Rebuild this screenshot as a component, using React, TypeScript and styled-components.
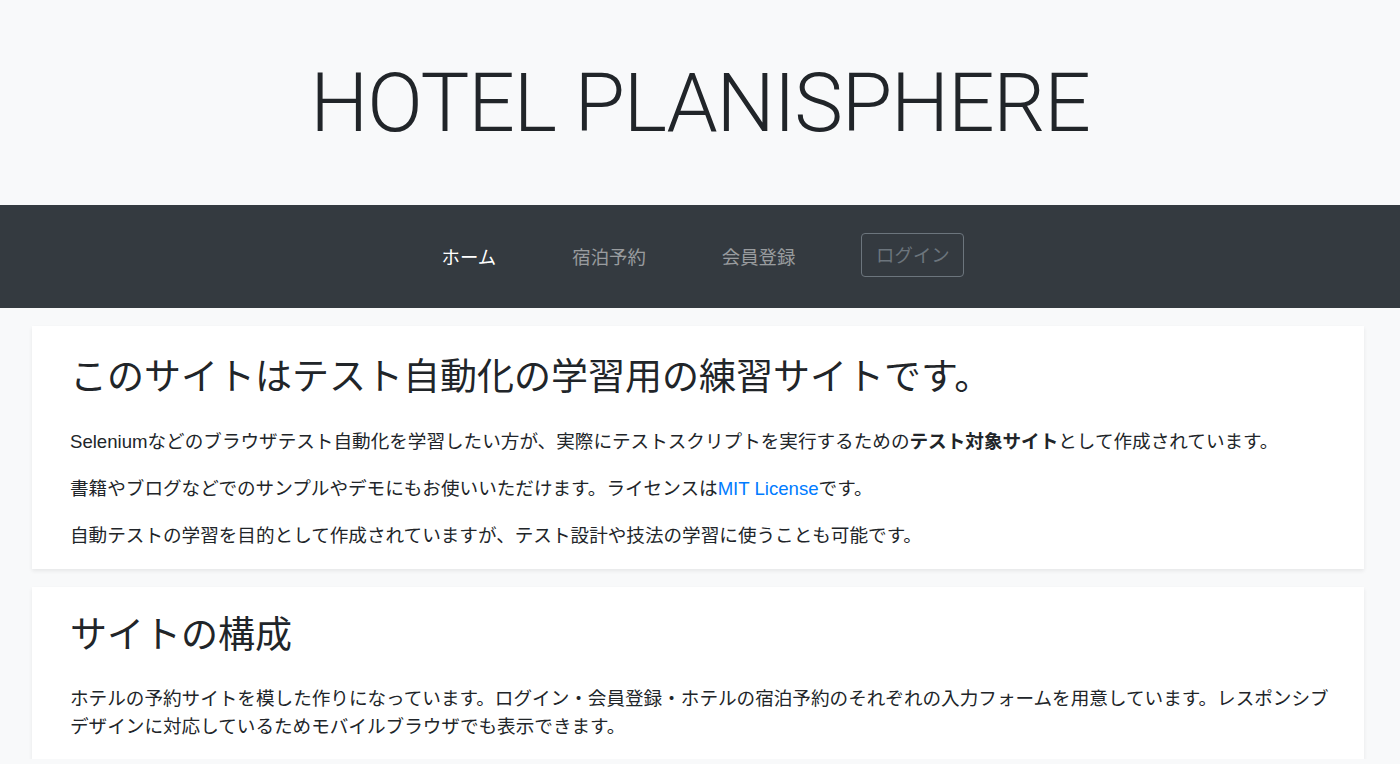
import React from "react";
import styled, { createGlobalStyle } from "styled-components";

const GlobalStyle = createGlobalStyle`
  html, body {
    margin: 0;
    padding: 0;
    background: #f8f9fa;
  }
  body {
    font-family: "Liberation Sans", "Noto Sans CJK JP", sans-serif;
    color: #212529;
    font-size: 18.6px;
    line-height: 1.5;
  }
  * { box-sizing: border-box; }
`;

const Header = styled.header`
  height: 205px;
  display: flex;
  align-items: center;
  justify-content: center;
  background: #f8f9fa;
`;

const Title = styled.h1`
  margin: 0;
  font-family: Roboto, "Liberation Sans", sans-serif;
  font-weight: 300;
  font-size: 82px;
  line-height: 1;
  color: #212529;
  letter-spacing: -1.2px;
`;

const NavBar = styled.nav`
  height: 103px;
  background: #343a40;
  display: flex;
  align-items: center;
  justify-content: center;
  gap: 66px;
  padding-left: 6px;
`;

const NavList = styled.div`
  display: flex;
  align-items: center;
  gap: 76px;
`;

const NavLink = styled.a<{ $active?: boolean }>`
  font-size: 18.4px;
  line-height: 1.5;
  text-decoration: none;
  color: ${(p) => (p.$active ? "#ffffff" : "rgba(255,255,255,0.5)")};
  font-family: "Noto Sans CJK JP", sans-serif;
`;

const LoginButton = styled.a`
  display: inline-flex;
  align-items: center;
  justify-content: center;
  width: 103px;
  height: 44px;
  margin-bottom: 4px;
  border: 1px solid #6c757d;
  border-radius: 4px;
  color: #6c757d;
  font-size: 18.4px;
  font-family: "Noto Sans CJK JP", sans-serif;
  text-decoration: none;
`;

const Main = styled.main`
  padding: 18px 36px 0 32px;
  display: flex;
  flex-direction: column;
  gap: 18px;
`;

const Card = styled.section<{ $pt: number }>`
  background: #ffffff;
  box-shadow: 0 2px 4px rgba(0, 0, 0, 0.075);
  padding: ${(p) => p.$pt}px 32px 0 38px;
`;

const Heading = styled.h2<{ $mb: number }>`
  margin: 0 0 ${(p) => p.$mb}px;
  font-weight: 400;
  font-size: 37px;
  line-height: 1.2;
  font-family: "Liberation Sans", "Noto Sans CJK JP", sans-serif;
`;

const Para = styled.p<{ $lh?: number }>`
  margin: 0 0 18.5px;
  line-height: ${(p) => p.$lh ?? 28.5}px;
`;

const Strong = styled.strong`
  font-weight: 700;
`;

const Link = styled.a`
  color: #007bff;
  text-decoration: none;
`;

export default function App() {
  return (
    <>
      <GlobalStyle />
      <Header>
        <Title>HOTEL PLANISPHERE</Title>
      </Header>
      <NavBar>
        <NavList>
          <NavLink $active href="#">ホーム</NavLink>
          <NavLink href="#">宿泊予約</NavLink>
          <NavLink href="#">会員登録</NavLink>
        </NavList>
        <LoginButton href="#">ログイン</LoginButton>
      </NavBar>
      <Main>
        <Card $pt={30}>
          <Heading $mb={28}>このサイトはテスト自動化の学習用の練習サイトです。</Heading>
          <Para>
            Seleniumなどのブラウザテスト自動化を学習したい方が、実際にテストスクリプトを実行するための
            <Strong>テスト対象サイト</Strong>として作成されています。
          </Para>
          <Para>
            書籍やブログなどでのサンプルやデモにもお使いいただけます。ライセンスは
            <Link href="#">MIT License</Link>です。
          </Para>
          <Para>
            自動テストの学習を目的として作成されていますが、テスト設計や技法の学習に使うことも可能です。
          </Para>
        </Card>
        <Card $pt={27}>
          <Heading $mb={26}>サイトの構成</Heading>
          <Para $lh={28}>
            ホテルの予約サイトを模した作りになっています。ログイン・会員登録・ホテルの宿泊予約のそれぞれの入力フォームを用意しています。レスポンシブデザインに対応しているためモバイルブラウザでも表示できます。
          </Para>
        </Card>
      </Main>
    </>
  );
}
